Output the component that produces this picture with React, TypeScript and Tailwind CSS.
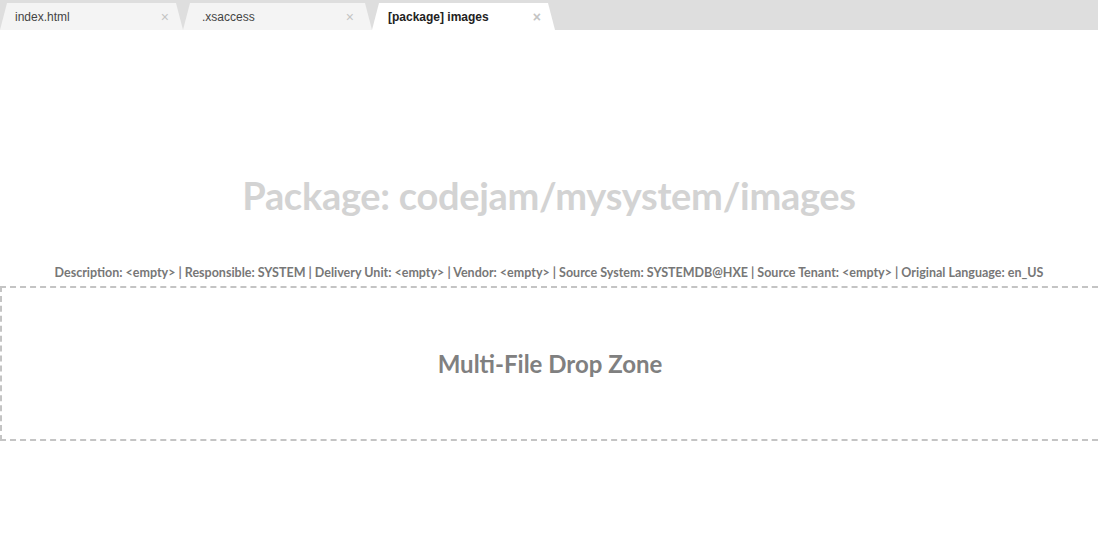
import React from "react"

const tabs = [
    { label: "index.html", width: "w-[183px] pl-[15px]", active: false },
    { label: ".xsaccess", width: "w-[189px] pl-[19px] pr-[18px]", active: false },
    { label: "[package] images", width: "w-[183px] pl-[16px]", active: true },
]

const meta =
    "Description: <empty> | Responsible: SYSTEM | Delivery Unit: <empty> | Vendor: <empty> | Source System: SYSTEMDB@HXE | Source Tenant: <empty> | Original Language: en_US"

export default function App() {
    return (
        <div className="w-[1098px] h-[535px] bg-white overflow-hidden font-['Liberation_Sans',sans-serif]">
            {/* tab strip */}
            <div className="flex h-[30px] bg-[#dedede] pt-[3px]">
                {tabs.map((tab) => (
                    <div
                        key={tab.label}
                        className={`${tab.width} h-[27px] flex items-center justify-between pr-[14px] text-[12px] ${
                            tab.active
                                ? "bg-white text-[#222] font-semibold"
                                : "bg-[#f4f4f4] text-[#444]"
                        } [clip-path:polygon(7px_0,calc(100%-7px)_0,100%_100%,0_100%)]`}
                    >
                        <span>{tab.label}</span>
                        <span className="text-[#c4c4c4] text-[14px] leading-none">×</span>
                    </div>
                ))}
            </div>

            <div className="flex flex-col items-center">
                <h1 className="mt-[143px] text-[38px] leading-[44px] font-bold text-[#d3d3d3] font-['Lato',sans-serif] tracking-[-0.3px]">
                    Package: codejam/mysystem/images
                </h1>
                <p className="mt-[48px] text-[12.5px] leading-[16px] font-bold text-[#777] font-['Lato',sans-serif]">{meta}</p>
            </div>

            {/* drop zone */}
            <div className="mt-[5px] h-[155px] border-t-2 border-l-2 border-b-2 border-dashed border-[#c4c4c4] flex items-center justify-center">
                <span className="text-[24px] font-bold text-[#808080] font-['Lato',sans-serif]">
                    Multi-File Drop Zone
                </span>
            </div>
        </div>
    )
}
